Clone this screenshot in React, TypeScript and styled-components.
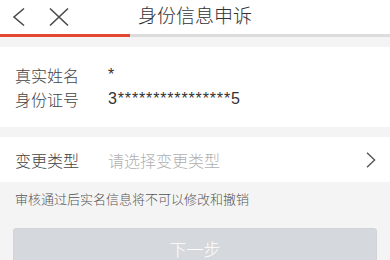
import React from "react";
import styled, { createGlobalStyle } from "styled-components";

const GlobalStyle = createGlobalStyle`
  html, body {
    margin: 0;
    padding: 0;
    background: #f4f4f4;
    font-family: "Noto Sans CJK SC", "Liberation Sans", sans-serif;
    font-weight: 300;
    color: #333;
  }
`;

const Header = styled.header`
  height: 34px;
  background: #fff;
  display: grid;
  grid-template-columns: 1fr auto 1fr;
  align-items: center;
`;

const NavIcons = styled.div`
  display: flex;
  align-items: center;
  gap: 22px;
  padding-left: 12px;
  height: 100%;
`;

const Title = styled.h1`
  margin: 0;
  font-size: 19px;
  font-weight: 300;
  color: #333;
  line-height: 24px;
  margin-top: -4px;
`;

const Progress = styled.div`
  height: 3px;
  background: #dcdcdc;
`;

const ProgressFill = styled.div`
  height: 100%;
  background: #e2472f;
`;

const Card = styled.section`
  background: #fff;
  margin-top: 10px;
  padding: 16px 15px;
`;

const InfoRow = styled.div`
  display: flex;
  font-size: 16px;
  line-height: 24px;
`;

const Label = styled.span`
  width: 93px;
  flex-shrink: 0;
  color: #444;
`;

const Value = styled.span`
  font-family: "Liberation Sans", sans-serif;
  font-weight: 400;
  letter-spacing: 0.85px;
  color: #333;
`;

const SelectRow = styled.div`
  background: #fff;
  margin-top: 10px;
  height: 45px;
  display: flex;
  align-items: center;
  padding: 0 14px 0 15px;
  font-size: 16px;
`;

const Placeholder = styled.span`
  flex: 1;
  color: #b0b0b0;
`;

const Note = styled.p`
  margin: 0;
  padding: 8px 15px 0;
  font-size: 13px;
  line-height: 18px;
  color: #555;
`;

const NextButton = styled.button`
  display: block;
  margin: 20px 13px 0;
  width: calc(100% - 26px);
  height: 40px;
  border: 1px solid #d0d3d7;
  border-radius: 3px;
  background: #d5d8dc;
  color: #fff;
  font-family: "Noto Sans CJK SC", sans-serif;
  font-weight: 300;
  font-size: 17px;
  padding: 0;
`;

const BackIcon = () => (
  <svg width="14" height="20" viewBox="0 0 14 20">
    <path d="M12 1.5 L2 10 L12 18.5" fill="none" stroke="#4a4a4a" strokeWidth="1.6" />
  </svg>
);

const CloseIcon = () => (
  <svg width="22" height="20" viewBox="0 0 22 20">
    <path d="M2 1.5 L20 18.5 M20 1.5 L2 18.5" fill="none" stroke="#4a4a4a" strokeWidth="1.6" />
  </svg>
);

const ChevronRight = () => (
  <svg width="10" height="16" viewBox="0 0 10 16">
    <path d="M1 0.8 L8.6 8 L1 15.2" fill="none" stroke="#555" strokeWidth="1.4" />
  </svg>
);

export default function App() {
  return (
    <>
      <GlobalStyle />
      <Header>
        <NavIcons>
          <BackIcon />
          <CloseIcon />
        </NavIcons>
        <Title>身份信息申诉</Title>
        <div />
      </Header>
      <Progress>
        <ProgressFill style={{ width: `${(1 / 3) * 100}%` }} />
      </Progress>
      <Card>
        <InfoRow>
          <Label>真实姓名</Label>
          <Value>*</Value>
        </InfoRow>
        <InfoRow>
          <Label>身份证号</Label>
          <Value>3****************5</Value>
        </InfoRow>
      </Card>
      <SelectRow>
        <Label>变更类型</Label>
        <Placeholder>请选择变更类型</Placeholder>
        <ChevronRight />
      </SelectRow>
      <Note>审核通过后实名信息将不可以修改和撤销</Note>
      <NextButton>下一步</NextButton>
    </>
  );
}
